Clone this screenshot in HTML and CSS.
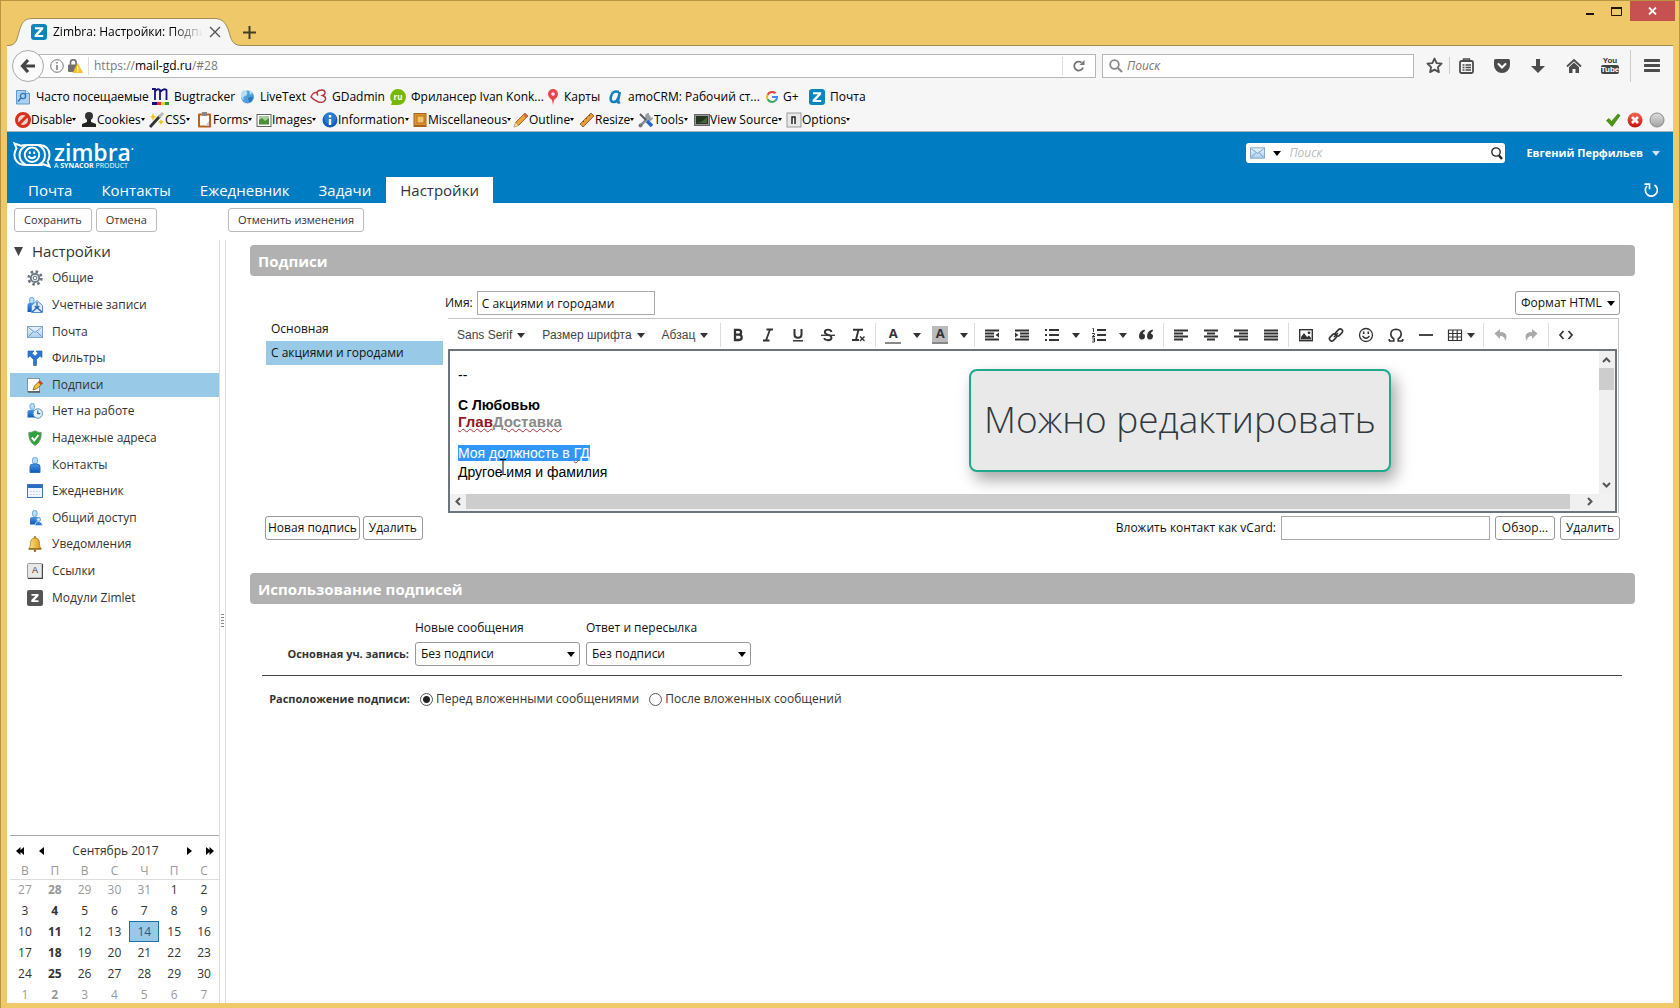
FILE: index.html
```html
<!DOCTYPE html>
<html lang="ru">
<head>
<meta charset="utf-8">
<title>Zimbra: Настройки: Подписи</title>
<link rel="stylesheet" href="styles.css">
</head>
<body>
<svg class="defs" width="0" height="0" aria-hidden="true">
  <defs>
    <linearGradient id="gBody" x1="0" y1="0" x2="0" y2="1"><stop offset="0" stop-color="#4a96e6"/><stop offset="1" stop-color="#0d58b8"/></linearGradient>
    <linearGradient id="gGold" x1="0" y1="0" x2="1" y2="0"><stop offset="0" stop-color="#fbe38a"/><stop offset="1" stop-color="#d99a10"/></linearGradient>
    <linearGradient id="gGrey" x1="0" y1="0" x2="0" y2="1"><stop offset="0" stop-color="#dedede"/><stop offset="1" stop-color="#a2a2a2"/></linearGradient>
    <linearGradient id="gRed" x1="0" y1="0" x2="0" y2="1"><stop offset="0" stop-color="#f26a52"/><stop offset="1" stop-color="#c51208"/></linearGradient>
    <linearGradient id="gMail" x1="0" y1="0" x2="0" y2="1"><stop offset="0" stop-color="#eef6fe"/><stop offset="1" stop-color="#a9cdf0"/></linearGradient>
    <symbol id="zimbra" viewBox="0 0 16 16"><rect width="16" height="16" rx="3" fill="#0a86bd"/><path d="M4 3.2h8.2v2L7 11h5.2v2H3.6v-2L8.9 5.2H4z" fill="#fff"/></symbol>
    <symbol id="mail" viewBox="0 0 16 12"><rect x=".5" y=".5" width="15" height="11" fill="url(#gMail)" stroke="#7fa5cc"/><path d="M1.5 1.5l6.500 5 6.500-5M1.500 10.500l4.500-4.500M14.500 10.500l-4.500-4.500" fill="none" stroke="#7098c4"/></symbol>
    <symbol id="person" viewBox="0 0 16 16"><rect x="5.500" y=".5" width="5" height="6" rx="2" fill="#b9dcf8" stroke="#6aa9e0"/><path d="M3 15.500V10q0-3 3-3h4q3 0 3 3v5.500z" fill="url(#gBody)" stroke="#2a6fc0"/></symbol>
    <symbol id="caret" viewBox="0 0 8 5"><path d="M0 0h8L4 5z"/></symbol>
  </defs>
</svg>

<div class="window">
  <header class="titlebar">
    <div class="tab">
      <svg class="tab-shape" viewBox="0 0 234 28"><path d="M0 27.500C9 27.500 9 20 11 14C14 4 16 .5 25 .5H206C215 .5 218 5 221 14C223 21 224 27.500 234 27.500V28H0z" fill="#f6f6f6"/><path d="M0 27.500C9 27.500 9 20 11 14C14 4 16 .5 25 .5H206C215 .5 218 5 221 14C223 21 224 27.500 234 27.500" fill="none" stroke="#a08c52"/></svg>
      <div class="tab-content">
        <svg width="16" height="16"><use href="#zimbra"/></svg>
        <span class="tab-title">Zimbra: Настройки: Подписи</span>
        <button class="plain" aria-label="Закрыть вкладку"><svg width="12" height="12" viewBox="0 0 12 12"><path d="M1 1l10 10M11 1L1 11" stroke="#555" stroke-width="1.400"/></svg></button>
      </div>
    </div>
    <button class="plain new-tab" aria-label="Новая вкладка"><svg width="13" height="13" viewBox="0 0 13 13"><path d="M6.500 0v13M0 6.500h13" stroke="#453c22" stroke-width="2"/></svg></button>
    <div class="window-buttons">
      <button class="plain wb" aria-label="Свернуть"><svg width="10" height="10" viewBox="0 0 10 10"><path d="M1 8h8" stroke="#1b1608" stroke-width="2"/></svg></button>
      <button class="plain wb" aria-label="Развернуть"><svg width="11" height="9" viewBox="0 0 11 9"><path d="M.5 1v7.500h10V1" fill="none" stroke="#1b1608"/><path d="M0 1h11" stroke="#1b1608" stroke-width="2"/></svg></button>
      <button class="plain wb-close" aria-label="Закрыть"><svg width="9" height="8" viewBox="0 0 9 8"><path d="M1 .5l7 7M8 .5l-7 7" stroke="#fff" stroke-width="1.800"/></svg></button>
    </div>
  </header>

  <div class="browser">
    <div class="nav-row">
      <button class="back" aria-label="Назад"><svg width="16" height="14" viewBox="0 0 16 14"><path d="M8 1L2.500 7 8 13M3 7h12" fill="none" stroke="#444" stroke-width="3.200"/></svg></button>
      <div class="url-bar">
        <svg width="14" height="14" viewBox="0 0 14 14"><circle cx="7" cy="7" r="6.300" fill="none" stroke="#777"/><path d="M7 6v5M7 3v1.600" stroke="#777" stroke-width="1.500"/></svg>
        <svg width="15" height="14" viewBox="0 0 15 14"><path d="M2.500 6V3.500a2.800 2.800 0 015.600 0V6" fill="none" stroke="#707070" stroke-width="1.600"/><rect x="0" y="5.500" width="10" height="7.500" rx="1" fill="#707070"/><path d="M9.500 4.500L14.500 13.500H5z" fill="#fcc52a" stroke="#e9a90c" stroke-width=".6"/><path d="M9.700 7.500v3M9.700 11.200v1.300" stroke="#fff" stroke-width="1.200"/></svg>
        <span class="url-sep"></span>
        <span class="url" role="textbox" aria-label="Адрес">https://<b>mail-gd.ru</b>/#28</span>
        <button class="plain reload" aria-label="Обновить"><svg width="12" height="12" viewBox="0 0 12 12"><path d="M10 7.500A4.500 4.500 0 118.500 2.500" fill="none" stroke="#777" stroke-width="1.800"/><path d="M6.500 5H11.500V0z" fill="#777"/></svg></button>
      </div>
      <label class="browser-search">
        <svg width="14" height="14" viewBox="0 0 14 14"><circle cx="5.500" cy="5.500" r="4.300" fill="none" stroke="#888" stroke-width="1.800"/><path d="M9 9l4 4" stroke="#888" stroke-width="2.200"/></svg>
        <input type="text" placeholder="Поиск" aria-label="Поиск в интернете">
      </label>
      <div class="browser-tools">
        <button class="plain bt" aria-label="Закладка"><svg width="17" height="17" viewBox="0 0 17 17"><path d="M8.500 1.500l2.100 4.600 5 .6-3.700 3.400 1 5-4.400-2.500-4.400 2.500 1-5L1.400 6.700l5-.6z" fill="none" stroke="#4c4c4c" stroke-width="1.800" stroke-linejoin="round"/></svg></button>
        <span class="tool-sep"></span>
        <button class="plain bt" aria-label="Библиотека"><svg width="15" height="16" viewBox="0 0 15 16"><rect x="1" y="3" width="13" height="12" rx="1.500" fill="none" stroke="#4c4c4c" stroke-width="1.800"/><path d="M4.500 3V1h6v2M3.500 7h2M6.500 7h5.500M3.500 9.500h2M6.500 9.500h5.500M3.500 12h2M6.500 12h5.500" stroke="#4c4c4c" stroke-width="1.400" fill="none"/></svg></button>
        <button class="plain bt" aria-label="Pocket"><svg width="16" height="14" viewBox="0 0 16 14"><path d="M1.500 0h13Q16 0 16 1.500V6A8 8 0 010 6V1.500Q0 0 1.500 0z" fill="#4c4c4c"/><path d="M4.500 5L8 8.500 11.500 5" fill="none" stroke="#fff" stroke-width="2" stroke-linecap="round"/></svg></button>
        <button class="plain bt" aria-label="Загрузки"><svg width="14" height="14" viewBox="0 0 14 14"><path d="M5 0h4v7h5l-7 7-7-7h5z" fill="#4c4c4c"/></svg></button>
        <button class="plain bt" aria-label="Домой"><svg width="16" height="14" viewBox="0 0 16 14"><path d="M1 7.500L8 1l7 6.500" fill="none" stroke="#4c4c4c" stroke-width="1.800"/><path d="M3 8.200L8 3.600l5 4.600V14H9.500v-4h-3v4H3z" fill="#4c4c4c"/></svg></button>
        <button class="plain bt yt" aria-label="YouTube"><span>You</span><span class="tube">Tube</span></button>
        <span class="tool-sep tall"></span>
        <button class="plain bt" aria-label="Меню"><svg width="16" height="13" viewBox="0 0 16 13"><path d="M1 1.500h14M1 6.500h14M1 11.500h14" stroke="#4c4c4c" stroke-width="3" stroke-linecap="round"/></svg></button>
      </div>
    </div>

    <nav class="bookmarks" aria-label="Закладки">
      <a href="#"><svg width="16" height="16" viewBox="0 0 16 16"><path d="M1.500 1.500h9l4 3v10.500h-13z" fill="#a9d1f2" stroke="#5a9ad0"/><path d="M10.500 1.500v3h4" fill="#e8f3fc" stroke="#5a9ad0"/><circle cx="8" cy="7" r="2.600" fill="none" stroke="#3273b4" stroke-width="1.300"/><path d="M6 9l-3 3.500" stroke="#3273b4" stroke-width="1.500"/></svg>Часто посещаемые</a>
      <a href="#"><svg width="17" height="17" viewBox="0 0 17 17"><path d="M0 1h3v11M3 3.500Q5.500 0 8 2V12M8.500 3.500Q12 0 14.500 2V12" fill="none" stroke="#16107e" stroke-width="1.800"/><path d="M0 15.500h5" stroke="#16107e" stroke-width="3"/><path d="M5 15.500h4" stroke="#e23030" stroke-width="3"/><path d="M9 15.500h4" stroke="#e8d020" stroke-width="3"/><path d="M13 15.500h4" stroke="#2a9a3c" stroke-width="3"/></svg>Bugtracker</a>
      <a href="#"><svg width="15" height="15" viewBox="0 0 15 15"><circle cx="7.500" cy="8" r="6.500" fill="#4f9fdc"/><path d="M2 2q4-2 5 1t-2 4-1 4q-4-2-3-6zM9 1l4 2-3 3z" fill="#b8def5"/><path d="M8 9q3-2 5-1-1 5-4 5z" fill="#2c74bb"/></svg>LiveText</a>
      <a href="#"><svg width="17" height="15" viewBox="0 0 17 15"><path d="M8 6.500Q5.500 3 9 1.500q5-1.500 6 1.500.5 2.500-2.500 3.500 3.500 1 3 4-2 4-7 2.500-5-2-7.500-5Q3 2.500 8 3.500" fill="none" stroke="#b3343c" stroke-width="1.400"/></svg>GDadmin</a>
      <a href="#"><svg width="16" height="16" viewBox="0 0 16 16"><path d="M8 0a8 8 0 110 16H1l1-3A8 8 0 018 0z" fill="#76b900"/><text x="8" y="11" text-anchor="middle" font-size="8" font-weight="700" font-family="Open Sans" fill="#fff">ru</text></svg>Фрилансер Ivan Konk...</a>
      <a href="#"><svg width="12" height="16" viewBox="0 0 12 16"><path d="M6 0a5 5 0 015 5q0 3-4 6l-1 5-1-5Q1 8 1 5a5 5 0 015-5z" fill="#f0414a"/><circle cx="6" cy="5" r="1.800" fill="#fff"/></svg>Карты</a>
      <a href="#"><svg width="14" height="14" viewBox="0 0 14 14"><path d="M10 2Q3 0 1.800 7q-.8 5 3 5 3 0 5-5l1-5-2 10q0 1 2.200 0" fill="none" stroke="#0f81bd" stroke-width="2.600"/></svg>amoCRM: Рабочий ст...</a>
      <a href="#"><svg width="12" height="12" viewBox="0 0 12 12" fill="none" stroke-width="2"><path d="M9.500 2.300A5 5 0 001.600 3.700" stroke="#e8443a"/><path d="M1.600 3.700a5 5 0 000 4.600" stroke="#f9bc15"/><path d="M1.600 8.300a5 5 0 007.600 1.500" stroke="#34a853"/><path d="M9.200 9.800A4.500 4.500 0 0011 6H6" stroke="#4285f4"/></svg>G+</a>
      <a href="#"><svg width="16" height="16"><use href="#zimbra"/></svg>Почта</a>
    </nav>

    <div class="devbar">
      <button class="plain"><svg width="16" height="16" viewBox="0 0 16 16"><circle cx="8" cy="8" r="6.500" fill="#f4d4cc" stroke="#d8301c" stroke-width="3"/><path d="M4 12l8-8" stroke="#d8301c" stroke-width="3"/></svg>Disable<i></i></button>
      <button class="plain"><svg width="16" height="16" viewBox="0 0 16 16"><circle cx="8" cy="4" r="4" fill="#333"/><path d="M6 7h4v3l5 2v3H1v-3l5-2z" fill="#222"/></svg>Cookies<i></i></button>
      <button class="plain"><svg width="16" height="16" viewBox="0 0 16 16"><path d="M4 1l1 3 3 1-3 1-1 3-1-3-2-1 2-1zM12 7l1 2 2 1-2 1-1 2-1-2-2-1 2-1z" fill="#f2c21c"/><path d="M1 15L11 4" stroke="#333" stroke-width="2.800"/><path d="M10 5l4-4" stroke="#b9b9b9" stroke-width="2.800"/></svg>CSS<i></i></button>
      <button class="plain"><svg width="16" height="16" viewBox="0 0 16 16"><rect x="1" y="1.500" width="13" height="14" rx="1" fill="#b9641d"/><rect x="3" y="3.500" width="9" height="10" fill="#fff"/><rect x="5" y="0" width="5" height="4" fill="#888"/><path d="M12 9v5H8z" fill="#ccd"/></svg>Forms<i></i></button>
      <button class="plain"><svg width="16" height="16" viewBox="0 0 16 16"><rect x="1" y="2.500" width="14" height="12" fill="#fff" stroke="#666"/><rect x="3" y="4.500" width="10" height="8" fill="#4f8f3c"/><path d="M3 8l3-2 3 3 4-3V4.500H3z" fill="#a7cfa0"/></svg>Images<i></i></button>
      <button class="plain"><svg width="16" height="16" viewBox="0 0 16 16"><circle cx="8" cy="8" r="7.500" fill="#1560b4"/><circle cx="8" cy="6" r="6" fill="#3a8cdc" opacity=".6"/><path d="M8 7v6M8 3v2.500" stroke="#fff" stroke-width="2.400"/></svg>Information<i></i></button>
      <button class="plain"><svg width="16" height="16" viewBox="0 0 16 16"><rect x="2" y="1.500" width="12" height="13" fill="#dd922f" stroke="#a9621a"/><rect x="5" y="4" width="7" height="7" fill="#f5c26b" stroke="#b8721f"/><path d="M2 13.500h12" stroke="#a9621a"/></svg>Miscellaneous<i></i></button>
      <button class="plain"><svg width="16" height="16" viewBox="0 0 16 16"><path d="M1 15l2-5 9-9 3 3-9 9z" fill="#f0a23c" stroke="#a8672a"/><path d="M11 2l3 3" stroke="#d9694f" stroke-width="3"/><path d="M1 15l1.500-4 2.500 2.500z" fill="#f7dfba"/></svg>Outline<i></i></button>
      <button class="plain"><svg width="16" height="16" viewBox="0 0 16 16"><path d="M1 12L12 1l3 3L4 15z" fill="#e39b43" stroke="#a5682a"/><path d="M4 9l1 1M7 6l1 1M10 3l1 1" stroke="#7a4512"/></svg>Resize<i></i></button>
      <button class="plain"><svg width="16" height="16" viewBox="0 0 16 16"><path d="M2 14L12 4" stroke="#8a8f96" stroke-width="2.500"/><path d="M11 1a4 4 0 104 4l-2 1-2-2z" fill="#9aa0a8"/><path d="M2 2l6 6" stroke="#555" stroke-width="1.800"/><path d="M9 9l5 5" stroke="#2567c8" stroke-width="3.500"/><circle cx="2.500" cy="13.500" r="2" fill="#777"/></svg>Tools<i></i></button>
      <button class="plain"><svg width="16" height="16" viewBox="0 0 16 16"><rect x=".5" y="2.500" width="15" height="11" fill="#999" stroke="#666"/><rect x="2" y="4" width="12" height="8" fill="#26351f"/><path d="M3 11q6-1 10-6v6z" fill="#46663a"/></svg>View Source<i></i></button>
      <button class="plain"><svg width="16" height="16" viewBox="0 0 16 16"><rect x="1" y="1" width="14" height="14" fill="#e8e8e8" stroke="#999"/><path d="M6 12V5h3v7" fill="#fff" stroke="#222" stroke-width="1.500"/></svg>Options<i></i></button>
      <span class="dev-status">
        <svg width="16" height="16" viewBox="0 0 16 16"><path d="M1.500 8.500l2.500-2 2.500 3L13 2l2 1.500L7 14.500z" fill="#4c9a12" stroke="#35750a" stroke-width=".7"/></svg>
        <svg width="16" height="16" viewBox="0 0 16 16"><circle cx="8" cy="8" r="7.500" fill="url(#gRed)"/><path d="M5 5l6 6M11 5l-6 6" stroke="#fff" stroke-width="2.600"/></svg>
        <svg width="16" height="16" viewBox="0 0 16 16"><circle cx="8" cy="8" r="7" fill="url(#gGrey)" stroke="#8a8a8a"/></svg>
      </span>
    </div>
  </div>

  <div class="app-header">
    <div class="brand-row">
      <a class="logo" href="#" aria-label="Zimbra">
        <svg width="38" height="26" viewBox="0 0 38 26" fill="none" stroke="#fff" stroke-width="2"><path d="M13 23C4 23 1 17 1.500 12 1.800 9.500 2.500 8 3.500 6.500L1.500 1.500 8 3.800C10 3 12 3 14 3"/><path d="M13 23Q6.500 19.500 6.500 13T14 3H27Q36.500 4 36.500 13q0 4-2 6.500L36.500 24.500 30.500 22.200Q28.500 23 26 23z"/><path d="M25 3Q32 6 32 13T25.500 23"/><circle cx="19" cy="12.800" r="7.200"/><path d="M15.300 14q3.700 4.500 7.400 0"/><path d="M16.800 9.500v2.500M21.200 9.500v2.500"/></svg>
        <span class="logo-text"><span class="logo-name">zimbra<small>•</small></span><span class="logo-sub">A <b>SYNACOR</b> PRODUCT</span></span>
      </a>
      <div class="app-search">
        <svg width="15" height="12"><use href="#mail"/></svg>
        <button class="plain" aria-label="Область поиска"><svg width="8" height="5"><use href="#caret"/></svg></button>
        <input type="text" placeholder="Поиск" aria-label="Поиск в почте">
        <button class="plain" aria-label="Найти"><svg width="12" height="13" viewBox="0 0 12 13"><circle cx="5" cy="5" r="4.200" fill="none" stroke="#222" stroke-width="1.300"/><path d="M8 8.500l3 3.500" stroke="#222" stroke-width="2.400"/></svg></button>
      </div>
      <button class="plain user">Евгений Перфильев<svg width="8" height="5"><use href="#caret"/></svg></button>
    </div>
    <nav class="app-tabs">
      <a href="#">Почта</a><a href="#">Контакты</a><a href="#">Ежедневник</a><a href="#">Задачи</a><a href="#" class="active">Настройки</a>
      <button class="plain refresh" aria-label="Обновить"><svg width="14" height="14" viewBox="0 0 14 14"><path d="M10.500 2A6 6 0 113 3" fill="none" stroke="#fff" stroke-width="1.700"/><path d="M.5 1.200h5v5" fill="none" stroke="#fff" stroke-width="1.700"/></svg></button>
    </nav>
  </div>

  <div class="actions">
    <div class="actions-left"><button class="btn soft">Сохранить</button><button class="btn soft">Отмена</button></div>
    <button class="btn soft">Отменить изменения</button>
  </div>

  <div class="workspace">
    <aside class="sidebar">
      <h2><svg width="9" height="9" viewBox="0 0 9 9"><path d="M0 0h9L4.500 9z" fill="#444"/></svg>Настройки</h2>
      <nav class="tree">
        <a href="#"><svg width="16" height="16" viewBox="0 0 16 16"><circle cx="8" cy="8" r="6.400" fill="none" stroke="#68747f" stroke-width="2.600" stroke-dasharray="2.500 2.500"/><circle cx="8" cy="8" r="4.200" fill="#e4eaf0" stroke="#68747f" stroke-width="1.800"/><circle cx="8" cy="8" r="1.800" fill="#fff" stroke="#68747f"/></svg>Общие</a>
        <a href="#"><svg width="16" height="16" viewBox="0 0 16 16"><rect x="2.500" y=".5" width="4.500" height="6" rx="2" fill="#b9dcf8" stroke="#6aa9e0"/><path d="M.5 15V8q0-2 2-2h6v9z" fill="url(#gBody)"/><path d="M4.500 8.500l5.500-5 5.500 5v7h-11z" fill="#dcebf9" stroke="#5b8fc6"/><path d="M10 5v6M7.800 9l2.200 2.500L12.200 9M5 15l4-3.500M15 15l-4-3.500" fill="none" stroke="#2264b8" stroke-width="1.200"/></svg>Учетные записи</a>
        <a href="#"><svg width="16" height="12"><use href="#mail"/></svg>Почта</a>
        <a href="#"><svg width="16" height="16" viewBox="0 0 16 16"><path d="M6.500 15.500V9.500L3 6 1 7.500V1h6L5 3.200l3 3 3-3L9 1h6v6.500L13 6 9.500 9.500v6z" fill="#2a78d4" stroke="#1b5db0" stroke-width=".6"/></svg>Фильтры</a>
        <a href="#" class="selected"><svg width="16" height="16" viewBox="0 0 16 16"><rect x=".5" y="1.500" width="12" height="13" fill="#fff" stroke="#8a949e"/><path d="M1 15h12" stroke="#555" stroke-width="1.500"/><path d="M6 13l1.500-4 5-5 3 2.500-5.500 5z" fill="#f5c53c" stroke="#6d5312" stroke-width=".8"/><path d="M12 4.500l2.800 2.500" stroke="#d4402c" stroke-width="2.600"/></svg>Подписи</a>
        <a href="#"><svg width="16" height="16" viewBox="0 0 16 16"><rect x="3" y=".5" width="4.500" height="6" rx="2" fill="#b9dcf8" stroke="#6aa9e0"/><path d="M.5 14.500V9q0-2 2-2h6v7.500z" fill="url(#gBody)"/><circle cx="10.800" cy="10.500" r="4.700" fill="#e7f1fb" stroke="#5b8fc6"/><path d="M10.800 7.500v3.200h2.500" fill="none" stroke="#2b5d95" stroke-width="1.200"/></svg>Нет на работе</a>
        <a href="#"><svg width="16" height="16" viewBox="0 0 16 16"><path d="M8 .8q3 2 6.200 1.700.5 9-6.200 13Q1.300 11.500 1.800 2.500 5 2.800 8 .8z" fill="#2ea23a" stroke="#6f9f74"/><path d="M4.800 7.500L7.300 10.500 11.500 5" fill="none" stroke="#fff" stroke-width="2"/></svg>Надежные адреса</a>
        <a href="#"><svg width="16" height="16"><use href="#person"/></svg>Контакты</a>
        <a href="#"><svg width="16" height="14" viewBox="0 0 16 14"><rect x=".5" y=".5" width="15" height="13" fill="#eef5fc" stroke="#3f79bb"/><path d="M1 2.500h14" stroke="#2a6cc0" stroke-width="3"/><path d="M3 7.500h10M3 10.500h10" stroke="#c7d6e6" stroke-dasharray="2 1"/></svg>Ежедневник</a>
        <a href="#"><svg width="16" height="16" viewBox="0 0 16 16"><rect x="5.500" y=".5" width="4.500" height="6" rx="2" fill="#b9dcf8" stroke="#6aa9e0"/><path d="M3 14.500V9q0-2 2-2h5q2 0 2 2v5.500z" fill="url(#gBody)"/><circle cx="11.500" cy="9.500" r="2" fill="#cfe6fa" stroke="#5b98d8"/><path d="M8 15.500q0-4 3.500-4t4 4z" fill="#2f7bd4" stroke="#d6e8fa" stroke-width=".7"/></svg>Общий доступ</a>
        <a href="#"><svg width="16" height="16" viewBox="0 0 16 16"><path d="M8 0v3" stroke="#8f6a16" stroke-width="1.500"/><path d="M2 12.500Q3.500 11.500 3.500 7.500 3.500 2 8 2t4.500 5.500q0 4 1.500 5z" fill="url(#gGold)" stroke="#ad7a10" stroke-width=".8"/><path d="M1.500 13h13" stroke="#8f6a16" stroke-width="1.500"/><circle cx="8" cy="14.700" r="1.200" fill="#8f6a16"/></svg>Уведомления</a>
        <a href="#"><svg width="16" height="16" viewBox="0 0 16 16"><rect x=".5" y=".5" width="15" height="15" rx="1" fill="#e8e8e8" stroke="#9a9a9a"/><path d="M1 15.300h14.400V1" fill="none" stroke="#444" stroke-width="1.200"/><text x="8" y="9.500" text-anchor="middle" font-size="9" font-family="Liberation Sans" fill="#333">A</text></svg>Ссылки</a>
        <a href="#"><svg width="16" height="16" viewBox="0 0 16 16"><rect width="16" height="16" rx="2" fill="#555"/><path d="M4.500 4h7v2L7.500 10.300h4V12H4.300v-2L8.500 5.800h-4z" fill="#fff"/></svg>Модули Zimlet</a>
      </nav>
      <section class="calendar" aria-label="Календарь">
        <div class="cal-head">
          <button class="plain" aria-label="Предыдущий год"><svg width="9" height="8" viewBox="0 0 9 8"><path d="M4.500 0v3L8 0v8L4.500 5v3L0 4z"/></svg></button>
          <button class="plain" aria-label="Предыдущий месяц"><svg width="5" height="8" viewBox="0 0 5 8"><path d="M5 0v8L0 4z"/></svg></button>
          <span>Сентябрь 2017</span>
          <button class="plain" aria-label="Следующий месяц"><svg width="5" height="8" viewBox="0 0 5 8"><path d="M0 0v8l5-4z"/></svg></button>
          <button class="plain" aria-label="Следующий год"><svg width="9" height="8" viewBox="0 0 9 8"><path d="M4.500 0v3L1 0v8l3.500-3v3L9 4z"/></svg></button>
        </div>
        <table>
          <thead><tr><th>В</th><th>П</th><th>В</th><th>С</th><th>Ч</th><th>П</th><th>С</th></tr></thead>
          <tbody>
            <tr><td class="out">27</td><td class="out busy">28</td><td class="out">29</td><td class="out">30</td><td class="out">31</td><td>1</td><td>2</td></tr>
            <tr><td>3</td><td class="busy">4</td><td>5</td><td>6</td><td>7</td><td>8</td><td>9</td></tr>
            <tr><td>10</td><td class="busy">11</td><td>12</td><td>13</td><td class="today">14</td><td>15</td><td>16</td></tr>
            <tr><td>17</td><td class="busy">18</td><td>19</td><td>20</td><td>21</td><td>22</td><td>23</td></tr>
            <tr><td>24</td><td class="busy">25</td><td>26</td><td>27</td><td>28</td><td>29</td><td>30</td></tr>
            <tr><td class="out">1</td><td class="out busy">2</td><td class="out">3</td><td class="out">4</td><td class="out">5</td><td class="out">6</td><td class="out">7</td></tr>
          </tbody>
        </table>
      </section>
    </aside>
    <div class="splitter"><span class="grip"></span></div>

    <main class="content">
      <h3 class="section-title">Подписи</h3>
      <div class="signatures">
        <div class="sig-list">
          <button class="plain">Основная</button>
          <button class="plain selected">С акциями и городами</button>
        </div>
        <div class="sig-editor">
          <div class="name-row">
            <label for="sig-name">Имя:</label>
            <input class="field" id="sig-name" type="text" value="С акциями и городами">
            <span class="select format"><select aria-label="Формат"><option>Формат HTML</option></select><svg width="8" height="5"><use href="#caret"/></svg></span>
          </div>
          <div class="editor">
            <div class="editor-bar">
              <button class="plain menu">Sans Serif<svg width="8" height="5"><use href="#caret"/></svg></button>
              <button class="plain menu">Размер шрифта<svg width="8" height="5"><use href="#caret"/></svg></button>
              <button class="plain menu">Абзац<svg width="8" height="5"><use href="#caret"/></svg></button>
              <span class="sep first"></span>
              <button class="plain tb" aria-label="Полужирный"><svg width="16" height="16" viewBox="0 0 16 16"><path d="M5 2.800h3.600q2.500 0 2.500 2.400T8.600 7.600H5zM5 7.600h4q2.700 0 2.700 2.700T9 13H5z" fill="none" stroke="#333" stroke-width="2.300"/></svg></button>
              <button class="plain tb" aria-label="Курсив"><svg width="16" height="16" viewBox="0 0 16 16"><path d="M6.500 2.500h6.500M3 13.500h6.500M10 2.500L6 13.500" stroke="#333" stroke-width="1.800"/></svg></button>
              <button class="plain tb" aria-label="Подчеркнутый"><svg width="16" height="16" viewBox="0 0 16 16"><path d="M4.500 2v5.500q0 3.300 3.500 3.300t3.500-3.300V2" fill="none" stroke="#333" stroke-width="2"/><path d="M3 13.800h10" stroke="#333" stroke-width="1.500"/></svg></button>
              <button class="plain tb" aria-label="Зачеркнутый"><svg width="16" height="16" viewBox="0 0 16 16"><path d="M11.500 5Q11 2.600 8 2.600T4.800 5q0 2 3.200 2.800t3.500 3q0 2.400-3.500 2.400T4.300 11" fill="none" stroke="#333" stroke-width="1.900"/><path d="M1 8.300h14" stroke="#333" stroke-width="1.300"/></svg></button>
              <button class="plain tb" aria-label="Очистить"><svg width="16" height="16" viewBox="0 0 16 16"><path d="M3 2.800h10M8.500 2.800L6 12.800M2 13h7" stroke="#333" stroke-width="1.900"/><path d="M10 9.500l4.500 4.500M14.500 9.500L10 14" stroke="#333" stroke-width="1.400"/></svg></button>
              <span class="sep"></span>
              <button class="plain tb color" aria-label="Цвет текста"><span>A</span></button>
              <button class="plain drop" aria-label="Выбрать цвет текста"><svg width="8" height="5"><use href="#caret"/></svg></button>
              <button class="plain tb color back-color" aria-label="Цвет фона"><span>A</span></button>
              <button class="plain drop" aria-label="Выбрать цвет фона"><svg width="8" height="5"><use href="#caret"/></svg></button>
              <span class="sep"></span>
              <button class="plain tb" aria-label="Уменьшить отступ"><svg width="16" height="16" viewBox="0 0 16 16"><path d="M1 3.500h14M1 6.500h9M1 9.500h9M1 12.500h14" stroke="#333" stroke-width="2"/><path d="M15 5.500v5l-3.500-2.500z" fill="#333"/></svg></button>
              <button class="plain tb" aria-label="Увеличить отступ"><svg width="16" height="16" viewBox="0 0 16 16"><path d="M1 3.500h14M6 6.500h9M6 9.500h9M1 12.500h14" stroke="#333" stroke-width="2"/><path d="M1 5.500v5L4.500 8z" fill="#333"/></svg></button>
              <button class="plain tb" aria-label="Маркированный список"><svg width="16" height="16" viewBox="0 0 16 16"><path d="M1 3h2M1 8h2M1 13h2M5 3h10M5 8h10M5 13h10" stroke="#333" stroke-width="1.900"/></svg></button>
              <button class="plain drop" aria-label="Вид маркеров"><svg width="8" height="5"><use href="#caret"/></svg></button>
              <button class="plain tb" aria-label="Нумерованный список"><svg width="16" height="16" viewBox="0 0 16 16"><path d="M6 3h9M6 8h9M6 13h9" stroke="#333" stroke-width="1.900"/><path d="M1.500 1.500h1v3.500M1 6.500h2.500v1.200L1.300 9.500H4M1 11h2.500v4H1M1.500 13h2" fill="none" stroke="#333"/></svg></button>
              <button class="plain drop" aria-label="Вид нумерации"><svg width="8" height="5"><use href="#caret"/></svg></button>
              <button class="plain tb" aria-label="Цитата"><svg width="16" height="16" viewBox="0 0 16 16"><path d="M1 9.500Q1 4 6.500 2.500L7 4Q5 5 4.800 6.500a3 3 0 11-3.800 3zM9 9.500Q9 4 14.500 2.500L15 4q-2 1-2.200 2.500a3 3 0 11-3.800 3z" fill="#333"/></svg></button>
              <span class="sep"></span>
              <button class="plain tb" aria-label="По левому краю"><svg width="16" height="16" viewBox="0 0 16 16"><path d="M1 3.500h14M1 6.500h9M1 9.500h14M1 12.500h9" stroke="#333" stroke-width="2"/></svg></button>
              <button class="plain tb" aria-label="По центру"><svg width="16" height="16" viewBox="0 0 16 16"><path d="M1 3.500h14M4 6.500h8M1 9.500h14M4 12.500h8" stroke="#333" stroke-width="2"/></svg></button>
              <button class="plain tb" aria-label="По правому краю"><svg width="16" height="16" viewBox="0 0 16 16"><path d="M1 3.500h14M6 6.500h9M1 9.500h14M6 12.500h9" stroke="#333" stroke-width="2"/></svg></button>
              <button class="plain tb" aria-label="По ширине"><svg width="16" height="16" viewBox="0 0 16 16"><path d="M1 3.500h14M1 6.500h14M1 9.500h14M1 12.500h14" stroke="#333" stroke-width="2"/></svg></button>
              <span class="sep"></span>
              <button class="plain tb" aria-label="Изображение"><svg width="16" height="16" viewBox="0 0 16 16"><rect x="1.700" y="2.700" width="12.600" height="11" fill="none" stroke="#333" stroke-width="1.400"/><path d="M3 12.500V10l3-4 3 4 2-1.500 2 2.500v1.500z" fill="#333"/><circle cx="11" cy="5.800" r="1.400" fill="#333"/></svg></button>
              <button class="plain tb" aria-label="Ссылка"><svg width="16" height="16" viewBox="0 0 16 16"><g fill="none" stroke="#333" stroke-width="1.600"><rect x="7" y="3.200" width="8" height="4.600" rx="2.300" transform="rotate(-45 11 5.500)"/><rect x="1" y="8.200" width="8" height="4.600" rx="2.300" transform="rotate(-45 5 10.500)"/><path d="M6 10l4-4"/></g></svg></button>
              <button class="plain tb" aria-label="Смайлик"><svg width="16" height="16" viewBox="0 0 16 16"><circle cx="8" cy="8" r="6.500" fill="none" stroke="#333" stroke-width="1.300"/><path d="M4.500 9q3.500 4.500 7 0" fill="none" stroke="#333" stroke-width="1.300"/><path d="M5.700 4.500v2.500M10.300 4.500v2.500" stroke="#333" stroke-width="1.600"/></svg></button>
              <button class="plain tb" aria-label="Символ"><svg width="16" height="16" viewBox="0 0 16 16"><path d="M1 14h4.800v-2Q2.800 10.300 2.800 7 3 2.500 8 2.300 13 2.500 13.200 7q0 3.300-3 5v2H15M1.300 14v-2M14.700 14v-2" fill="none" stroke="#333" stroke-width="1.600"/></svg></button>
              <button class="plain tb" aria-label="Линия"><svg width="16" height="16" viewBox="0 0 16 16"><path d="M1 8h14" stroke="#333" stroke-width="1.800"/></svg></button>
              <button class="plain tb table-btn" aria-label="Таблица"><svg width="16" height="16" viewBox="0 0 16 16"><path d="M1.500 3h13v10.500h-13zM1.500 6.500h13M1.500 10h13M5.800 3v10.500M10.200 3v10.500" fill="none" stroke="#333" stroke-width="1.200"/></svg><svg width="8" height="5"><use href="#caret"/></svg></button>
              <span class="sep"></span>
              <button class="plain tb" aria-label="Отменить" disabled><svg width="16" height="16" viewBox="0 0 16 16"><path d="M1.500 6.500L7 2v3q6.500 0 6.500 5 0 2-1.500 4 0-5-5-5v3z" fill="#aaa"/></svg></button>
              <button class="plain tb" aria-label="Повторить" disabled><svg width="16" height="16" viewBox="0 0 16 16"><path d="M14.500 6.500L9 2v3Q2.500 5 2.500 10q0 2 1.500 4 0-5 5-5v3z" fill="#aaa"/></svg></button>
              <span class="sep"></span>
              <button class="plain tb" aria-label="Исходный код"><svg width="16" height="16" viewBox="0 0 16 16"><path d="M5.500 4L2 8l3.500 4M10.500 4L14 8l-3.500 4" fill="none" stroke="#333" stroke-width="1.700"/></svg></button>
            </div>
            <div class="editor-body">
              <div class="doc" contenteditable="true" spellcheck="false" aria-label="Текст подписи">
                <p class="dashes">--</p>
                <p class="tight"><b>С Любовью</b></p>
                <p class="brand"><span class="glav">Глав</span><span class="dost">Доставка</span></p>
                <p><span class="marked">Моя должность в <u>ГД</u></span></p>
                <p>Другое имя и фамилия</p>
              </div>
              <div class="vbar"><svg width="9" height="6" viewBox="0 0 9 6"><path d="M1 5l3.500-3.500L8 5" fill="none" stroke="#555" stroke-width="2"/></svg><span class="vthumb"></span><svg width="9" height="6" viewBox="0 0 9 6"><path d="M1 1l3.500 3.500L8 1" fill="none" stroke="#555" stroke-width="2"/></svg></div>
              <div class="hbar"><svg width="6" height="9" viewBox="0 0 6 9"><path d="M5 1L1.500 4.500 5 8" fill="none" stroke="#555" stroke-width="2"/></svg><span class="hthumb"></span><svg width="6" height="9" viewBox="0 0 6 9"><path d="M1 1l3.500 3.500L1 8" fill="none" stroke="#555" stroke-width="2"/></svg></div>
              <div class="callout" role="note">Можно редактировать</div>
              <svg class="ibeam" width="8" height="16" viewBox="0 0 8 16"><path d="M1 .5h2.500l.5.500.5-.5H7M1 15.500h2.500l.5-.5.5.5H7M4 1v14" fill="none" stroke="#000"/></svg>
            </div>
          </div>
        </div>
        <div class="sig-actions"><button class="btn">Новая подпись</button><button class="btn del">Удалить</button></div>
        <div class="vcard-row">
          <label for="vcard">Вложить контакт как vCard:</label>
          <input class="field" id="vcard" type="text">
          <button class="btn del">Обзор...</button><button class="btn del">Удалить</button>
        </div>
      </div>

      <h3 class="section-title">Использование подписей</h3>
      <div class="usage">
        <label class="col1" for="sel-new">Новые сообщения</label>
        <label class="col2" for="sel-reply">Ответ и пересылка</label>
        <strong>Основная уч. запись:</strong>
        <span class="select"><select id="sel-new"><option>Без подписи</option></select><svg width="8" height="5"><use href="#caret"/></svg></span>
        <span class="select"><select id="sel-reply"><option>Без подписи</option></select><svg width="8" height="5"><use href="#caret"/></svg></span>
      </div>
      <hr>
      <div class="placement" role="radiogroup" aria-labelledby="placement-label">
        <strong id="placement-label">Расположение подписи:</strong>
        <label><input type="radio" name="place" checked>Перед вложенными сообщениями</label>
        <label><input type="radio" name="place">После вложенных сообщений</label>
      </div>
    </main>
  </div>
</div>
</body>
</html>
```
FILE: styles.css
```css
* { box-sizing: border-box; }
body { margin: 0; font: 12px/16px "Open Sans", "Noto Sans", sans-serif; color: #333; background: #fff; }
svg { display: block; flex: none; }
.defs { position: absolute; }
a { color: inherit; text-decoration: none; }
button, input, select { font: inherit; color: inherit; }
h2, h3, p { margin: 0; }
.plain { border: 0; background: none; padding: 0; display: flex; align-items: center; justify-content: center; }

.window { height: 100vh; min-height: 700px; display: flex; flex-direction: column; background: #efc969; padding: 0 7px 5px; border-top: 1px solid #b8963f; box-shadow: inset 1px 0 #b8963f, inset -1px 0 #b8963f; }

/* title bar */
.titlebar { height: 45px; flex: none; display: flex; align-items: flex-end; box-shadow: inset 0 -1px #a08c52; }
.tab { display: grid; grid-template-columns: 234px; margin-left: 1px; }
.tab > * { grid-area: 1 / 1; }
.tab-shape { width: 234px; height: 28px; }
.tab-content { display: flex; align-items: center; padding: 0 21px 0 23px; gap: 6px; color: #000; }
.tab-title { flex: 1; min-width: 0; white-space: nowrap; overflow: hidden; -webkit-mask-image: linear-gradient(to left, transparent, #000 30px); mask-image: linear-gradient(to left, transparent, #000 30px); }
.new-tab { height: 27px; margin-left: 1px; }
.window-buttons { margin-left: auto; align-self: flex-start; display: flex; margin-right: -2px; }
.wb { width: 27px; height: 20px; }
.wb-close { width: 45px; height: 20px; background: #c75050; }

/* browser chrome */
.browser { background: #f6f6f6; color: #000; border-bottom: 1px solid #a8b4b8; flex: none; }
.nav-row { display: flex; align-items: center; height: 39px; padding: 0 3px 0 5px; }
.back { width: 32px; height: 32px; border: 1px solid #aaa; border-radius: 50%; background: #fbfbfb; display: flex; align-items: center; justify-content: center; padding: 0; z-index: 1; }
.url-bar { flex: 1; height: 24px; border: 1px solid #b5b9b5; background: #fff; margin-left: -5px; padding-left: 10px; display: flex; align-items: center; gap: 4px; }
.url-sep { width: 1px; height: 18px; background: #ddd; margin: 0 1px; }
.url { flex: 1; color: #7a7a7a; }
.url b { font-weight: 400; color: #000; }
.reload { width: 33px; height: 18px; border-left: 1px solid #ddd; }
.browser-search { width: 312px; height: 24px; margin-left: 6px; border: 1px solid #b5b9b5; background: #fff; display: flex; align-items: center; gap: 4px; padding-left: 6px; }
.browser-search input { flex: 1; border: 0; outline: 0; background: none; padding: 0; }
.browser-search input::placeholder { font-style: italic; color: #777; }
.browser-tools { display: flex; align-items: center; margin-left: 5px; }
.bt { width: 36px; height: 30px; }
.bt:first-child { width: 30px; }
.tool-sep { width: 1px; height: 17px; background: #ccc; margin-right: -2px; }
.tool-sep.tall { height: 32px; margin: 0 3px 0 2px; }
.yt { flex-direction: column; font: bold 8px/8px "Liberation Sans", sans-serif; color: #333; }
.tube { background: #444; color: #fff; border-radius: 2px; line-height: 9px; }
.bookmarks { display: grid; grid-template-columns: 137px 88px 70px 80px 157px 62px 157px 43px auto; justify-content: start; align-items: center; height: 23px; padding-left: 8px; }
.bookmarks a { display: flex; align-items: center; gap: 5px; white-space: nowrap; }
.devbar { display: grid; grid-template-columns: 66px 68px 48px 59px 66px 90px 101px 66px 59px 56px 92px 80px 1fr; height: 23px; align-items: center; padding: 0 8px 0 8px; }
.devbar button { justify-content: flex-start; white-space: nowrap; }
.devbar i { border: 2px solid transparent; border-top: 3px solid #000; border-bottom: 0; }
.dev-status { justify-self: end; display: flex; gap: 6px; }

/* application header */
.app-header { background: #007cc3; color: #fff; height: 71px; flex: none; display: flex; flex-direction: column; justify-content: space-between; }
.brand-row { display: flex; align-items: flex-start; padding: 10px 13px 0 6px; }
.logo { display: flex; margin-right: auto; gap: 3px; }
.logo-text { display: flex; flex-direction: column; }
.logo-name { display: flex; font: 600 23px/20px "Open Sans", sans-serif; }
.logo-name small { font-size: 7px; line-height: 16px; }
.logo-sub { font: 7px/8px "Open Sans", sans-serif; }
.app-search { width: 259px; height: 20px; margin-top: 1px; background: #fff; border-radius: 3px; display: flex; align-items: center; padding: 0 2px 0 4px; gap: 8px; color: #000; }
.app-search input { flex: 1; min-width: 0; border: 0; outline: 0; padding: 0; background: none; }
.app-search input::placeholder { font-style: italic; color: #bbb; }
.user { font-size: 11px; font-weight: 700; gap: 9px; margin: 1px 0 0 21px; height: 20px; fill: #cfe6f6; }
.app-tabs { display: flex; align-items: flex-end; padding-left: 7px; font-size: 15px; line-height: 26px; }
.app-tabs a { padding: 0 14px; margin-right: 1px; height: 26px; }
.app-tabs .active { background: #fff; color: #333; }
.refresh { margin: 0 15px 6px auto; }

.actions { background: #fff; flex: none; display: flex; padding: 5px 7px 8px; }
.actions-left { width: 214px; display: flex; gap: 4px; }
.btn { height: 24px; padding: 0 2px; border: 1px solid #999; border-radius: 3px; background: #fff; white-space: nowrap; }
.btn.soft { border-color: #bbb; padding: 0 9px; font-size: 11px; }
.btn.del { width: 60px; }

/* workspace */
.workspace { background: #fff; flex: 1; min-height: 0; display: flex; }
.sidebar { width: 213px; padding-left: 3px; border-right: 1px solid #ddd; display: flex; flex-direction: column; flex: none; }
.sidebar h2 { font-size: 15px; line-height: 22px; font-weight: 400; display: flex; align-items: center; gap: 9px; padding-left: 4px; }
.tree { display: grid; height: 346px; margin-top: 3px; grid-auto-rows: 1fr; align-items: center; }
.tree a { height: 24px; display: flex; align-items: center; gap: 9px; padding-left: 17px; }
.tree .selected, .sig-list .selected { background: #98cae7; }
.calendar { margin-top: auto; height: 168px; overflow: hidden; border-top: 1px solid #aaa; }
.cal-head { display: grid; grid-template-columns: 20px 22px 1fr 20px 20px; align-items: center; justify-items: center; height: 28px; padding-top: 1px; }
.calendar table { width: 100%; border-collapse: collapse; table-layout: fixed; }
.calendar th { font-weight: 400; color: #999; height: 15px; padding: 0; line-height: 14px; border-bottom: 1px solid #ddd; }
.calendar td { height: 21px; padding: 0; text-align: center; line-height: 18px; }
.calendar .out { color: #999; }
.calendar .busy { font-weight: 700; }
.calendar .today { background: #98cae7; box-shadow: inset 0 0 0 1px #1a6fa3; color: #17608f; }
.splitter { width: 6px; border-right: 1px solid #ddd; display: flex; justify-content: center; flex: none; }
.grip { margin-top: 374px; width: 3px; height: 14px; background: repeating-linear-gradient(#888 0 1px, #fff 1px 3px); }

.content { flex: 1; min-width: 0; padding: 5px 38px 0 24px; color: #111; }
.section-title { background: #b1b1b1; color: #fff; font-size: 15px; height: 31px; line-height: 32px; font-weight: 700; border-radius: 4px; padding-left: 8px; }
.signatures { display: grid; grid-template-columns: 178px 1fr; row-gap: 2px; padding: 15px 15px 33px; }
.sig-list { padding: 26px 0 0 1px; }
.sig-list button { width: 100%; height: 24px; justify-content: flex-start; padding-left: 5px; }
.name-row { display: flex; align-items: center; gap: 4px; padding-left: 2px; }
.field { height: 24px; border: 1px solid #aaa; padding: 0 4px; background: #fff; border-radius: 0; outline: 0; }
.name-row .field { width: 178px; }
.select { display: inline-grid; align-items: center; }
.select > * { grid-area: 1 / 1; }
.select svg { justify-self: end; margin-right: 5px; pointer-events: none; fill: #000; }
.select select { appearance: none; width: 100%; height: 24px; border: 1px solid #999; border-radius: 3px; background: #fff; padding: 0 5px; }
.format { width: 105px; margin-left: auto; }
.editor { margin: 3px 1px 0 5px; border: 1px solid #c4c4c4; border-left: 0; border-bottom: 0; }
.editor-bar { display: flex; align-items: center; height: 30px; padding: 2px 0 0 9px; font: 12px/16px "Liberation Sans", sans-serif; color: #444; fill: #333; }
.menu { gap: 5px; margin-right: 17px; white-space: nowrap; }
.sep { width: 1px; height: 24px; background: #ddd; margin: 0 2px; }
.sep.first { margin-left: -5px; }
.tb { width: 30px; height: 28px; }
.drop { width: 12px; height: 28px; margin: 0 2px 0 3px; }
.color span { width: 16px; font: bold 13px/15px "Open Sans", sans-serif; border-bottom: 2px solid #888; height: 18px; color: #333; }
.back-color span { background: #bbb; }
.table-btn { gap: 4px; width: 40px; }
.editor-body { position: relative; display: grid; grid-template-columns: 1fr 15px; grid-template-rows: 143px 15px; border: 2px solid #6c747c; padding: 0 1px 2px 0; margin-right: 1px; background: #f2f2f2; }
.doc { background: #fff; padding: 16px 8px 0; font: 14px/19px "Liberation Sans", sans-serif; color: #000; overflow: hidden; outline: 0; }
.dashes { line-height: 16px; padding-bottom: 13px; }
.tight { line-height: 18px; }
.brand { line-height: 16px; font-weight: 700; font-size: 15px; padding-bottom: 14px; }
.brand span, .marked u { text-decoration: underline wavy #b03030 1px; text-underline-offset: 1px; }
.glav { color: #8e1c24; }
.dost { color: #8a8a8a; }
.marked { background: #3297fd; color: #fff; }
.vbar, .hbar { background: #f0f0f0; display: flex; align-items: center; }
.vbar { flex-direction: column; padding: 6px 0; }
.vthumb { width: 15px; height: 22px; background: #cdcdcd; margin: 5px 0 auto; }
.hbar { padding: 0 6px 0 5px; gap: 5px; }
.hthumb { flex: 1; height: 15px; background: #cdcdcd; margin-right: 12px; }
.callout { position: absolute; left: 519px; top: 18px; width: 422px; height: 103px; border: 2px solid #1fa98c; border-radius: 8px; background: #e9e9e9; box-shadow: 5px 8px 16px rgba(0, 0, 0, .35); font-size: 37px; line-height: 95px; font-weight: 300; color: #2f383e; text-align: center; white-space: nowrap; }
.ibeam { position: absolute; left: 49px; top: 108px; }
.sig-actions { display: flex; gap: 3px; padding-top: 1px; }
.vcard-row { display: flex; justify-content: flex-end; align-items: center; gap: 5px; }
.vcard-row .field { width: 209px; }

.usage { display: grid; grid-template-columns: 159px 165px 165px; column-gap: 6px; row-gap: 6px; align-items: center; margin-top: 16px; }
.usage .col1 { grid-column: 2; }
.usage strong, .placement strong { color: #333; font-size: 11px; text-align: right; }
hr { border: 0; border-top: 1px solid #444; margin: 9px 13px 0 12px; }
.placement { display: grid; grid-template-columns: 160px auto auto; justify-content: start; align-items: center; gap: 10px; margin-top: 15px; color: #333; }
.placement label { display: flex; align-items: center; gap: 3px; }
.placement input { appearance: none; width: 13px; height: 13px; margin: 0; border: 1px solid #555; border-radius: 50%; background: #fff; }
.placement input:checked { background: radial-gradient(#222 0 3px, #fff 4px); }
```
